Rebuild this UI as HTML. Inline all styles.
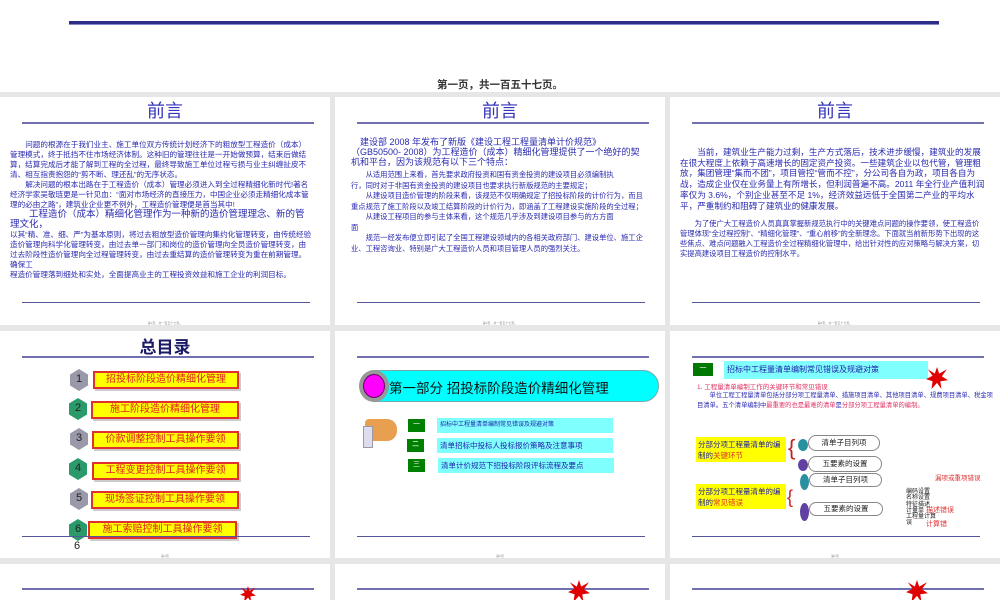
<!DOCTYPE html>
<html><head><meta charset="utf-8"><style>
*{margin:0;padding:0;box-sizing:border-box}
body{width:1000px;height:600px;overflow:hidden;background:#e6e6e6;position:relative;font-family:"Liberation Sans","Noto Sans CJK SC",sans-serif}
.a{position:absolute}
.s{position:absolute;background:#fff;overflow:hidden}
.t{position:absolute;width:100%;text-align:center;color:#3333bb;font-size:18px;top:3px;line-height:22px}
.ul{position:absolute;left:22px;width:292px;height:2px;background:#7070b0}
.bl{position:absolute;left:22px;width:288px;height:1px;background:#555599}
.ft{position:absolute;width:100%;text-align:center;font-size:3px;color:#888}
.tx{position:absolute;color:#2a2ab0;font-size:7.6px;line-height:10px}
.yb{position:absolute;background:#ffff00;border:2px solid #e03030;color:#e02020;font-size:10px;text-align:center;line-height:13px;box-shadow:2px 2px 0 #ccc}
.hx{position:absolute;width:18px;height:22px;clip-path:polygon(50% 0,100% 25%,100% 75%,50% 100%,0 75%,0 25%);color:#222;font-size:11px;text-align:center;line-height:20px}
.gb{position:absolute;background:#008000;width:17px;height:13px;color:#fff;font-size:7px;text-align:center}
.cb{position:absolute;background:#80ffff;height:15px;color:#2222aa;font-size:7.5px;line-height:15px;padding-left:3px}
.pill{position:absolute;border:1.5px solid #888;border-radius:10px;background:#fff;font-size:7.5px;text-align:center;color:#222}
.yl{position:absolute;background:#ffff00;font-size:7.5px;line-height:11px;color:#2222aa;padding:2px}
.st{position:absolute;width:22px;height:22px;background:#e00000;clip-path:polygon(50% 0,60% 30%,95% 10%,72% 42%,100% 60%,65% 65%,70% 100%,50% 72%,25% 100%,30% 65%,0 55%,30% 40%,8% 10%,40% 30%)}
</style></head><body>
<div class="a" style="left:0;top:0;width:1000px;height:92px;background:#fff"></div>
<div class="a" style="left:69px;top:21px;width:870px;height:3px;background:#2e2e88"></div>
<div class="a" style="left:69px;top:24px;width:870px;height:1px;background:#8888cc"></div>
<div class="a" style="left:0;top:77px;width:1000px;text-align:center;font-size:10.5px;color:#333;font-weight:bold">第一页，共一百五十七页。</div>

<!-- row1 col1 -->
<div class="s" style="left:0;top:97px;width:330px;height:228px">
<div class="t" style="left:0">前言</div><div class="ul" style="top:25px"></div>
<div class="tx" style="left:10px;top:43px;width:302px">&emsp;&emsp;问题的根源在于我们业主、施工单位双方传统计划经济下的粗放型工程造价（成本）管理模式，终于抵挡不住市场经济体制。这种旧的管理往往是一开始做预算，结束后做结算，结算完成后才能了解到工程的全过程，最终导致施工单位过程亏损与业主纠缠扯皮不清、相互指责抱怨的“剪不断、理还乱”的无序状态。<br>&emsp;&emsp;解决问题的根本出路在于工程造价（成本）管理必须进入到全过程精细化新时代!著名经济学家吴敬琏更是一针见血：“面对市场经济的直接压力，中国企业必须走精细化成本管理的必由之路”，建筑业企业更不例外，工程造价管理便是首当其中!<br><span style="font-size:9.5px">&emsp;&emsp;工程造价（成本）精细化管理作为一种新的造价管理理念、新的管理文化，</span><br>以其“精、准、细、严”为基本原则，将过去粗放型造价管理向集约化管理转变，由传统经验造价管理向科学化管理转变，由过去单一部门和岗位的造价管理向全员造价管理转变，由过去阶段性造价管理向全过程管理转变，由过去重结算的造价管理转变为重在前期管理。确保工<br>程造价管理落到细处和实处，全面提高业主的工程投资效益和施工企业的利润目标。</div>
<div class="bl" style="top:205px"></div><div class="ft" style="top:224px">第1页，共一百五十七页。</div></div>

<!-- row1 col2 -->
<div class="s" style="left:335px;top:97px;width:330px;height:228px">
<div class="t">前言</div><div class="ul" style="top:25px"></div>
<div class="tx" style="left:16px;top:40px;width:292px;font-size:9px;line-height:10px">&emsp;建设部 2008 年发布了新版《建设工程工程量清单计价规范》（GB50500- 2008）为工程造价（成本）精细化管理提供了一个绝好的契机和平台，因为该规范有以下三个特点：</div>
<div class="tx" style="left:16px;top:73px;width:292px;line-height:10.5px;font-size:7.3px">&emsp;&emsp;从适用范围上来看，首先要求政府投资和国有资金投资的建设项目必须编制执<br>行，同时对于非国有资金投资的建设项目也要求执行新版规范的主要规定；<br>&emsp;&emsp;从建设项目造价管理的阶段来看，该规范不仅明确规定了招投标阶段的计价行为，而且重点规范了施工阶段以及竣工结算阶段的计价行为，即涵盖了工程建设实施阶段的全过程；<br>&emsp;&emsp;从建设工程项目的参与主体来看，这个规范几乎涉及到建设项目参与的方方面<br>面<br>&emsp;&emsp;规范一经发布便立即引起了全国工程建设领域内的各相关政府部门、建设单位、施工企业、工程咨询业、特别是广大工程造价人员和项目管理人员的强烈关注。</div>
<div class="bl" style="top:205px"></div><div class="ft" style="top:224px">第2页，共一百五十七页。</div></div>

<!-- row1 col3 -->
<div class="s" style="left:670px;top:97px;width:330px;height:228px">
<div class="t">前言</div><div class="ul" style="top:25px"></div>
<div class="tx" style="left:10px;top:50px;width:305px;font-size:8.6px;line-height:10.7px">&emsp;&emsp;当前，建筑业生产能力过剩，生产方式落后，技术进步缓慢，建筑业的发展在很大程度上依赖于高速增长的固定资产投资。一些建筑企业以包代管，管理粗放，集团管理“集而不团”，项目管控“管而不控”，分公司各自为政，项目各自为战，造成企业仅在业务量上有所增长，但利润普遍不高。2011 年全行业产值利润率仅为 3.6%，个别企业甚至不足 1%，经济效益远低于全国第二产业的平均水平，严重制约和阻碍了建筑业的健康发展。</div>
<div class="tx" style="left:10px;top:122px;width:305px;line-height:10px;font-size:7.3px">&emsp;&emsp;为了使广大工程造价人员真真掌握新规范执行中的关键难点问题的操作要领，使工程造价管理体现“全过程控制”、“精细化管理”、“重心前移”的全新理念。下面就当前新形势下出现的这些焦点、难点问题融入工程造价全过程精细化管理中，给出针对性的应对策略与解决方案，切实提高建设项目工程造价的控制水平。</div>
<div class="bl" style="top:205px"></div><div class="ft" style="top:224px">第3页，共一百五十七页。</div></div>

<!-- row2 col1 -->
<div class="s" style="left:0;top:331px;width:330px;height:227px">
<div class="a" style="left:0;top:2px;width:330px;text-align:center;font-size:17px;font-weight:bold;color:#1a1a66">总目录</div>
<div class="ul" style="top:25px"></div>
<div class="hx" style="left:70px;top:38px;background:#9999aa">1</div><div class="yb" style="left:93px;top:40px;width:146px;height:18px">招投标阶段造价精细化管理</div>
<div class="hx" style="left:69px;top:67px;background:#2a9a6a">2</div><div class="yb" style="left:91px;top:70px;width:148px;height:18px">施工阶段造价精细化管理</div>
<div class="hx" style="left:70px;top:97px;background:#9999aa">3</div><div class="yb" style="left:92px;top:100px;width:147px;height:18px">价款调整控制工具操作要领</div>
<div class="hx" style="left:69px;top:127px;background:#2a9a6a">4</div><div class="yb" style="left:92px;top:131px;width:147px;height:18px">工程变更控制工具操作要领</div>
<div class="hx" style="left:70px;top:157px;background:#9999aa">5</div><div class="yb" style="left:91px;top:160px;width:148px;height:18px">现场签证控制工具操作要领</div>
<div class="hx" style="left:69px;top:188px;background:#2a9a6a">6</div><div class="yb" style="left:88px;top:190px;width:149px;height:18px">施工索赔控制工具操作要领</div>
<div class="bl" style="top:205px"></div>
<div class="a" style="left:74px;top:209px;font-size:11px;color:#222">6</div>
<div class="ft" style="top:223px">第4页</div></div>

<!-- row2 col2 -->
<div class="s" style="left:335px;top:331px;width:330px;height:227px">
<div class="ul" style="top:25px"></div>
<div class="a" style="left:25px;top:39px;width:299px;height:32px;background:#00ffff;border:1px solid #7aa;border-radius:16px"></div>
<div class="a" style="left:24px;top:39px;width:30px;height:32px;border-radius:50%;background:#999;"></div>
<div class="a" style="left:28px;top:43px;width:22px;height:24px;border-radius:50%;background:#ff00ff;border:1px solid #660066"></div>
<div class="a" style="left:54px;top:46px;font-size:13.5px;color:#111">第一部分 招投标阶段造价精细化管理</div>
<div class="a" style="left:30px;top:88px;width:32px;height:22px;background:#e8a050;border-radius:4px 10px 10px 6px"></div>
<div class="a" style="left:28px;top:95px;width:10px;height:22px;background:#dde;border:1px solid #99a"></div>
<div class="gb" style="left:73px;top:88px">一</div><div class="cb" style="left:102px;top:87px;width:176px;font-size:6px">招标中工程量清单编制常见错误及规避对策</div>
<div class="gb" style="left:72px;top:108px">二</div><div class="cb" style="left:102px;top:107px;width:176px">清单招标中投标人投标报价策略及注意事项</div>
<div class="gb" style="left:73px;top:128px">三</div><div class="cb" style="left:103px;top:127px;width:176px">清单计价规范下招投标阶段评标流程及要点</div>
<div class="bl" style="top:205px"></div><div class="ft" style="top:223px">第5页</div></div>

<!-- row2 col3 -->
<div class="s" style="left:670px;top:331px;width:330px;height:227px">
<div class="ul" style="top:25px"></div>
<div class="gb" style="left:23px;top:32px;width:20px;background:#007700">一</div>
<div class="cb" style="left:54px;top:30px;width:204px;height:18px;line-height:18px;font-size:8px">招标中工程量清单编制常见错误及规避对策</div>
<div class="st" style="left:256px;top:36px"></div>
<div class="a" style="left:27px;top:50px;font-size:6.5px;color:#e03060">1. 工程量清单编制工作的关键环节和常见错误</div>
<div class="tx" style="left:27px;top:60px;width:300px;font-size:6.3px;line-height:10px">&emsp;&emsp;单位工程工程量清单包括分部分项工程量清单、措施项目清单、其他项目清单、规费项目清单、税金项目清单。五个清单编制中<span style="color:#e03060">最重要的也是最难的清单</span>是<span style="color:#e03060">分部分项工程量清单的编制。</span></div>
<div class="yl" style="left:26px;top:106px;width:90px;height:25px">分部分项工程量清单的编制的<span style="color:#e03030">关键环节</span></div>
<div class="a" style="left:118px;top:104px;font-size:22px;color:#c02020;font-weight:100">{</div>
<div class="a" style="left:128px;top:108px;width:10px;height:12px;border-radius:50%;background:#2a8fa0"></div>
<div class="a" style="left:128px;top:128px;width:10px;height:12px;border-radius:50%;background:#6040a0"></div>
<div class="pill" style="left:138px;top:104px;width:72px;height:16px;line-height:13px">清单子目列项</div>
<div class="pill" style="left:138px;top:125px;width:74px;height:16px;line-height:13px">五要素的设置</div>
<div class="yl" style="left:26px;top:153px;width:90px;height:25px">分部分项工程量清单的编制的<span style="color:#e03030">常见错误</span></div>
<div class="a" style="left:117px;top:156px;font-size:18px;color:#c02020">{</div>
<div class="a" style="left:130px;top:143px;width:9px;height:16px;border-radius:50%;background:#2a8fa0"></div>
<div class="a" style="left:130px;top:172px;width:9px;height:18px;border-radius:50%;background:#6040a0"></div>
<div class="pill" style="left:139px;top:142px;width:73px;height:14px;line-height:11px">清单子目列项</div>
<div class="pill" style="left:139px;top:171px;width:74px;height:14px;line-height:11px">五要素的设置</div>
<div class="a" style="left:236px;top:158px;font-size:6px;color:#222;line-height:6.3px">编码设置<br>名称设置<br>特征描述<br>计量单<br>工程量计算<br>误</div>
<div class="a" style="left:265px;top:141px;font-size:6.5px;color:#e03030">漏项或重项错误</div>
<div class="a" style="left:256px;top:174px;font-size:7px;color:#e03030">描述错误</div>
<div class="a" style="left:256px;top:188px;font-size:7px;color:#e03030">计算错</div>
<div class="bl" style="top:205px"></div><div class="ft" style="top:223px">第6页</div></div>

<!-- row3 -->
<div class="s" style="left:0;top:564px;width:330px;height:36px"><div class="ul" style="top:24px"></div><div class="st" style="left:240px;top:22px;width:16px;height:16px"></div></div>
<div class="s" style="left:335px;top:564px;width:330px;height:36px"><div class="ul" style="top:24px"></div><div class="st" style="left:233px;top:16px"></div></div>
<div class="s" style="left:670px;top:564px;width:330px;height:36px"><div class="ul" style="top:24px"></div><div class="st" style="left:236px;top:16px"></div></div>
</body></html>
